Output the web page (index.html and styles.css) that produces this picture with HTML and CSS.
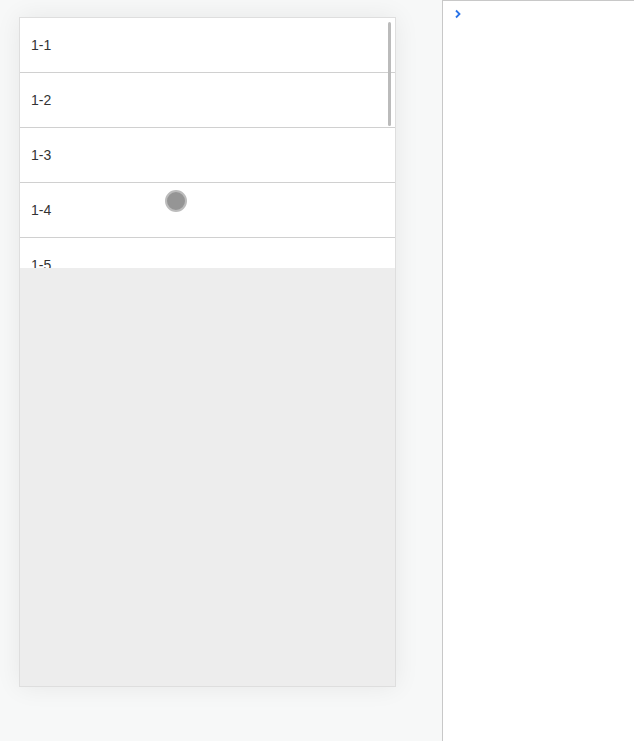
FILE: index.html
```html
<!DOCTYPE HTML>
<html>
  <head>
    <meta charset="utf-8">
    <title>List scroll</title>
    <link rel="stylesheet" href="styles.css">
  </head>
  <body>
    <div class="preview">
      <div class="phone">
        <div class="scroller">
          <ul class="list">
            <li>1-1</li>
            <li>1-2</li>
            <li>1-3</li>
            <li>1-4</li>
            <li>1-5</li>
          </ul>
          <div class="scrollbar"></div>
          <div class="touch"></div>
        </div>
      </div>
    </div>
    <div class="console">
      <div class="prompt">
        <svg width="8" height="10" viewBox="0 0 8 10">
          <path d="M2 1.5 L5.5 5 L2 8.5" fill="none" stroke="#2a73e8" stroke-width="1.8"/>
        </svg>
      </div>
    </div>
  </body>
</html>
```

FILE: styles.css
```css
html, body { margin: 0; height: 100%; }
body
{
  display: flex;
  font-family: "Liberation Sans", Arial, sans-serif;
  overflow: hidden;
}
.preview
{
  width: 442px;
  flex: none;
  background-color: #f7f8f8;
  padding: 17px 0 0 19px;
  box-sizing: border-box;
}
.phone
{
  width: 375px;
  height: 668px;
  border: 1px solid #dedede;
  background-color: #ededed;
  box-shadow: 0 0 24px rgba(0, 0, 0, 0.07);
}
.scroller
{
  position: relative;
  height: 250px;
  overflow: hidden;
  background-color: white;
}
.list { list-style: none; margin: 0; padding: 0; }
.list li
{
  height: 54px;
  line-height: 54px;
  border-bottom: 1px solid #d0d0d0;
  padding-left: 11px;
  font-size: 14px;
  color: #333;
}
.scrollbar
{
  position: absolute;
  top: 4px; right: 4px;
  width: 3px; height: 104px;
  background-color: #bbb;
  border-radius: 2px;
}
.touch
{
  position: absolute;
  left: 145px; top: 172px;
  width: 18px; height: 18px;
  border-radius: 50%;
  background-color: #959595;
  border: 2px solid #bcbcbc;
}
.console
{
  flex: 1;
  background-color: white;
  border-left: 1px solid #c8c8c8;
  border-top: 1px solid #c8c8c8;
}
.prompt { padding: 8px 0 0 11px; }
.prompt svg { display: block; }
```
